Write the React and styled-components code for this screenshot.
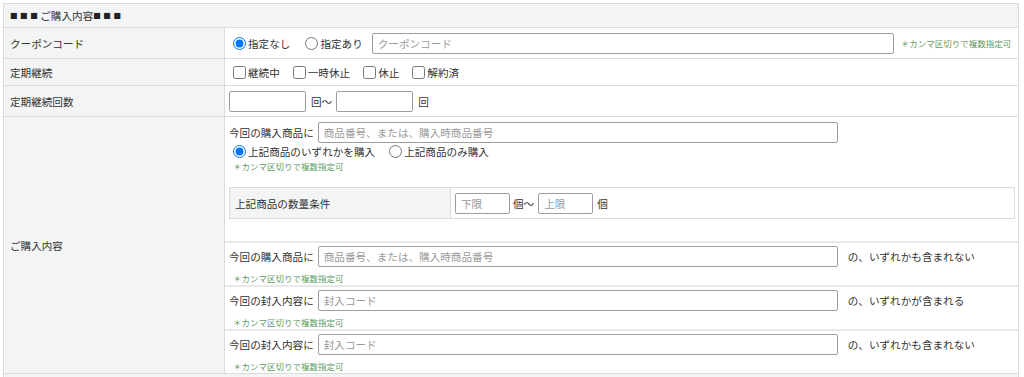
import React from 'react';
import styled, { createGlobalStyle } from 'styled-components';

const GlobalStyle = createGlobalStyle`
  body {
    margin: 0;
    background: #fff;
    font-family: "Noto Sans CJK JP", "Noto Sans", sans-serif;
    font-size: 10.6px;
    color: #333;
  }
  * { box-sizing: border-box; }
`;

const Page = styled.div`
  padding: 3px 0 0 3px;
  width: 1019px;
  height: 100vh;
  overflow: hidden;
`;

const Frame = styled.div`
  border: 1px solid #dcdcdc;
`;

const SectionHeader = styled.div`
  height: 23px;
  display: flex;
  align-items: center;
  padding-left: 6px;
  background: #f3f4f4;
`;

const Squares = styled.span`
  font-size: 7.6px;
  letter-spacing: 2.5px;
  color: #222;
`;

const NextSection = styled(SectionHeader)`
  border: 1px solid #dcdcdc;
  border-top: none;
`;

const Row = styled.div`
  display: grid;
  grid-template-columns: 221px 1fr;
  height: ${p => p.$h}px;
  border-top: 1px solid #dcdcdc;
`;

const Label = styled.div`
  display: flex;
  align-items: center;
  padding-left: 6px;
  background: #f3f4f4;
  border-right: 1px solid #dcdcdc;
`;

const Value = styled.div`
  display: flex;
  align-items: center;
  padding-left: ${p => p.$pl ?? 4}px;
  min-width: 0;
`;

const Stack = styled.div`
  display: flex;
  flex-direction: column;
  width: 100%;
  height: 100%;
`;

const Block = styled.div`
  flex: none;
  height: ${p => p.$h}px;
  padding: ${p => (p.$first ? '5px 3px 0 4px' : '3px 3px 0 4px')};
  border-top: ${p => (p.$first ? 'none' : '2px solid #e9e9e9')};
`;

const Line = styled.div`
  display: flex;
  align-items: center;
  height: ${p => p.$h ?? 21}px;
  padding-left: ${p => p.$pl ?? 0}px;
`;

const Choice = styled.label`
  display: inline-flex;
  align-items: center;
  gap: 2px;
  margin-right: ${p => p.$mr ?? 0}px;
  white-space: nowrap;

  input {
    margin: 0;
    width: 13px;
    height: 13px;
  }
`;

const TextBox = styled.input`
  width: ${p => p.$w}px;
  height: 21px;
  margin: 0 ${p => p.$mr ?? 0}px 0 ${p => p.$ml ?? 0}px;
  padding: 0 5px;
  border: 1px solid #9d9d9d;
  border-radius: 2px;
  font: inherit;
  color: #333;
  background: #fff;

  &::placeholder {
    color: #9a9a9a;
  }
`;

const Note = styled.div`
  height: 12px;
  line-height: 12px;
  font-size: 8.5px;
  color: #5f9b5f;
  padding-left: ${p => p.$pl ?? 4}px;
  margin-left: ${p => p.$ml ?? 0}px;
  margin-top: ${p => p.$mt ?? 0}px;
  white-space: nowrap;
`;

const Unit = styled.span`
  margin-right: ${p => p.$mr ?? 0}px;
  white-space: nowrap;
`;

const QtyTable = styled.div`
  display: grid;
  grid-template-columns: 221px 1fr;
  height: 32px;
  margin-top: 15px;
  border: 1px solid #dcdcdc;
`;

const QtyLabel = styled(Label)`
  padding-left: 5px;
`;

const note = '＊カンマ区切りで複数指定可';

const statuses = [
  { text: '継続中', mr: 13 },
  { text: '一時休止', mr: 13 },
  { text: '休止', mr: 13 },
  { text: '解約済', mr: 0 },
];

const exclusions = [
  { prefix: '今回の購入商品に', placeholder: '商品番号、または、購入時商品番号', suffix: 'の、いずれかも含まれない' },
  { prefix: '今回の封入内容に', placeholder: '封入コード', suffix: 'の、いずれかが含まれる' },
  { prefix: '今回の封入内容に', placeholder: '封入コード', suffix: 'の、いずれかも含まれない' },
];

export default function App() {
  return (
    <Page>
      <GlobalStyle />
      <Frame>
        <SectionHeader>
          <Squares>■■■</Squares>ご購入内容<Squares>■■■</Squares>
        </SectionHeader>

        <Row $h={31}>
          <Label>クーポンコード</Label>
          <Value $pl={8}>
            <Choice $mr={15}>
              <input type="radio" name="coupon" defaultChecked />指定なし
            </Choice>
            <Choice $mr={9}>
              <input type="radio" name="coupon" />指定あり
            </Choice>
            <TextBox $w={522} placeholder="クーポンコード" />
            <Note $ml={7} $pl={0}>{note}</Note>
          </Value>
        </Row>

        <Row $h={27}>
          <Label>定期継続</Label>
          <Value $pl={8}>
            {statuses.map(s => (
              <Choice key={s.text} $mr={s.mr}>
                <input type="checkbox" />{s.text}
              </Choice>
            ))}
          </Value>
        </Row>

        <Row $h={31}>
          <Label>定期継続回数</Label>
          <Value>
            <TextBox $w={77} $mr={5} />
            <Unit $mr={4}>回〜</Unit>
            <TextBox $w={77} $mr={5} />
            <Unit>回</Unit>
          </Value>
        </Row>

        <Row $h={257}>
          <Label>ご購入内容</Label>
          <Value $pl={0}>
            <Stack>
              <Block $first $h={124}>
                <Line>
                  <Unit $mr={4}>今回の購入商品に</Unit>
                  <TextBox $w={520} placeholder="商品番号、または、購入時商品番号" />
                </Line>
                <Line $h={17} $pl={4}>
                  <Choice $mr={14}>
                    <input type="radio" name="match" defaultChecked />上記商品のいずれかを購入
                  </Choice>
                  <Choice>
                    <input type="radio" name="match" />上記商品のみ購入
                  </Choice>
                </Line>
                <Note>{note}</Note>
                <QtyTable>
                  <QtyLabel>上記商品の数量条件</QtyLabel>
                  <Value>
                    <TextBox $w={55} $mr={3} placeholder="下限" />
                    <Unit $mr={4}>個〜</Unit>
                    <TextBox $w={55} $mr={4} placeholder="上限" />
                    <Unit>個</Unit>
                  </Value>
                </QtyTable>
              </Block>

              {exclusions.map((e, i) => (
                <Block key={i} $h={44}>
                  <Line>
                    <Unit $mr={4}>{e.prefix}</Unit>
                    <TextBox $w={520} $mr={10} placeholder={e.placeholder} />
                    <Unit>{e.suffix}</Unit>
                  </Line>
                  <Note $mt={5}>{note}</Note>
                </Block>
              ))}
            </Stack>
          </Value>
        </Row>
      </Frame>
      <NextSection />
    </Page>
  );
}
